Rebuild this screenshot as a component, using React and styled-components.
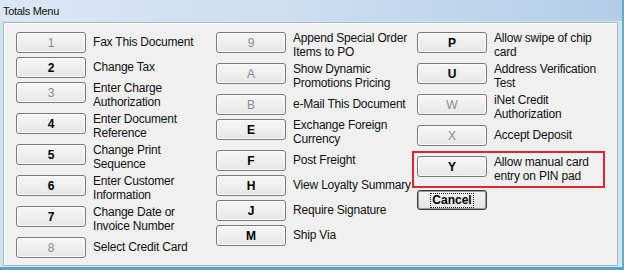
import React from 'react';
import styled, { createGlobalStyle } from 'styled-components';

const GlobalStyle = createGlobalStyle`
  html, body {
    margin: 0;
    padding: 0;
    background: #d6e4f2;
  }
  body {
    font-family: "Liberation Sans", Arial, sans-serif;
  }
`;

const Window = styled.div`
  width: 624px;
  height: 270px;
  display: flex;
  flex-direction: column;
  box-sizing: border-box;
  background: #d3e2f1;
  border-right: 2px solid #6aaabf;
  border-bottom: 3px solid #5aa3ba;
  overflow: hidden;
`;

const TitleBar = styled.div`
  height: 21px;
  flex: none;
  display: flex;
  align-items: center;
  padding-left: 3px;
  font-size: 11px;
  letter-spacing: -0.3px;
  color: #111;
  background: linear-gradient(to right, #dbe7f4 0%, #c9dcef 55%, #b3cde8 100%);
`;

const Client = styled.div`
  flex: 1;
  margin: 1px 4px 1px 3px;
  box-sizing: border-box;
  background: #f0f0f0;
  border: 1px solid #a9b7c6;
  box-shadow: inset 1px 1px 0 #ffffff;
  padding: 9px 17px 0 12px;
  display: grid;
  grid-template-columns: 200px 201px 1fr;
  align-items: start;
`;

const Column = styled.div`
  display: flex;
  flex-direction: column;
  gap: 4px;
`;

const Row = styled.div`
  display: flex;
  gap: 7px;
  align-items: flex-start;
  min-height: ${(p) => p.$minHeight || 21}px;
  outline: ${(p) => (p.$highlight ? '2px solid #e0262d' : 'none')};
  outline-offset: 3px;
`;

const KeyButton = styled.div`
  width: 70px;
  height: 21px;
  flex: none;
  box-sizing: border-box;
  display: flex;
  align-items: center;
  justify-content: center;
  border: 1px solid #7a7a7a;
  border-radius: 3px;
  background: linear-gradient(#f6f6f6, #e7e7e7);
  box-shadow: inset 0 0 0 1px #fbfbfb;
  font-size: 12px;
  font-weight: ${(p) => (p.$enabled ? 700 : 400)};
  color: ${(p) => (p.$enabled ? '#000' : '#8a8a8a')};
`;

const Label = styled.div`
  min-height: 21px;
  display: flex;
  align-items: center;
  font-size: 12px;
  line-height: 13.5px;
  letter-spacing: -0.2px;
  color: #111;
  white-space: pre;
`;

const CancelButton = styled.div`
  width: 70px;
  height: 20px;
  margin-top: 3px;
  box-sizing: border-box;
  display: flex;
  align-items: center;
  justify-content: center;
  border: 1px solid #3c3c3c;
  border-radius: 3px;
  background: linear-gradient(#f4f4f4, #e4e4e4);
  box-shadow: inset 0 0 0 1px #9a9a9a;
`;

const FocusText = styled.span`
  border: 1px dotted #222;
  padding: 0 1px;
  font-size: 12px;
  line-height: 13px;
  font-weight: 700;
  color: #000;
`;

const columns = [
  [
    { key: '1', label: 'Fax This Document' },
    { key: '2', label: 'Change Tax', on: true },
    { key: '3', label: 'Enter Charge\nAuthorization' },
    { key: '4', label: 'Enter Document\nReference', on: true },
    { key: '5', label: 'Change Print\nSequence', on: true },
    { key: '6', label: 'Enter Customer\nInformation', on: true },
    { key: '7', label: 'Change Date or\nInvoice Number', on: true },
    { key: '8', label: 'Select Credit Card' },
  ],
  [
    { key: '9', label: 'Append Special Order\nItems to PO' },
    { key: 'A', label: 'Show Dynamic\nPromotions Pricing' },
    { key: 'B', label: 'e-Mail This Document' },
    { key: 'E', label: 'Exchange Foreign\nCurrency', on: true },
    { key: 'F', label: 'Post Freight', on: true },
    { key: 'H', label: 'View Loyalty Summary', on: true },
    { key: 'J', label: 'Require Signature', on: true },
    { key: 'M', label: 'Ship Via', on: true },
  ],
  [
    { key: 'P', label: 'Allow swipe of chip\ncard', on: true },
    { key: 'U', label: 'Address Verification\nTest', on: true },
    { key: 'W', label: 'iNet Credit\nAuthorization' },
    { key: 'X', label: 'Accept Deposit', minHeight: 27 },
    { key: 'Y', label: 'Allow manual card\nentry on PIN pad', on: true, highlight: true },
  ],
];

export default function App() {
  return (
    <>
      <GlobalStyle />
      <Window>
        <TitleBar>Totals Menu</TitleBar>
        <Client>
          {columns.map((items, i) => (
            <Column key={i}>
              {items.map((it) => (
                <Row key={it.key} $highlight={it.highlight} $minHeight={it.minHeight}>
                  <KeyButton $enabled={it.on}>{it.key}</KeyButton>
                  <Label>{it.label}</Label>
                </Row>
              ))}
              {i === 2 && (
                <CancelButton>
                  <FocusText>Cancel</FocusText>
                </CancelButton>
              )}
            </Column>
          ))}
        </Client>
      </Window>
    </>
  );
}
